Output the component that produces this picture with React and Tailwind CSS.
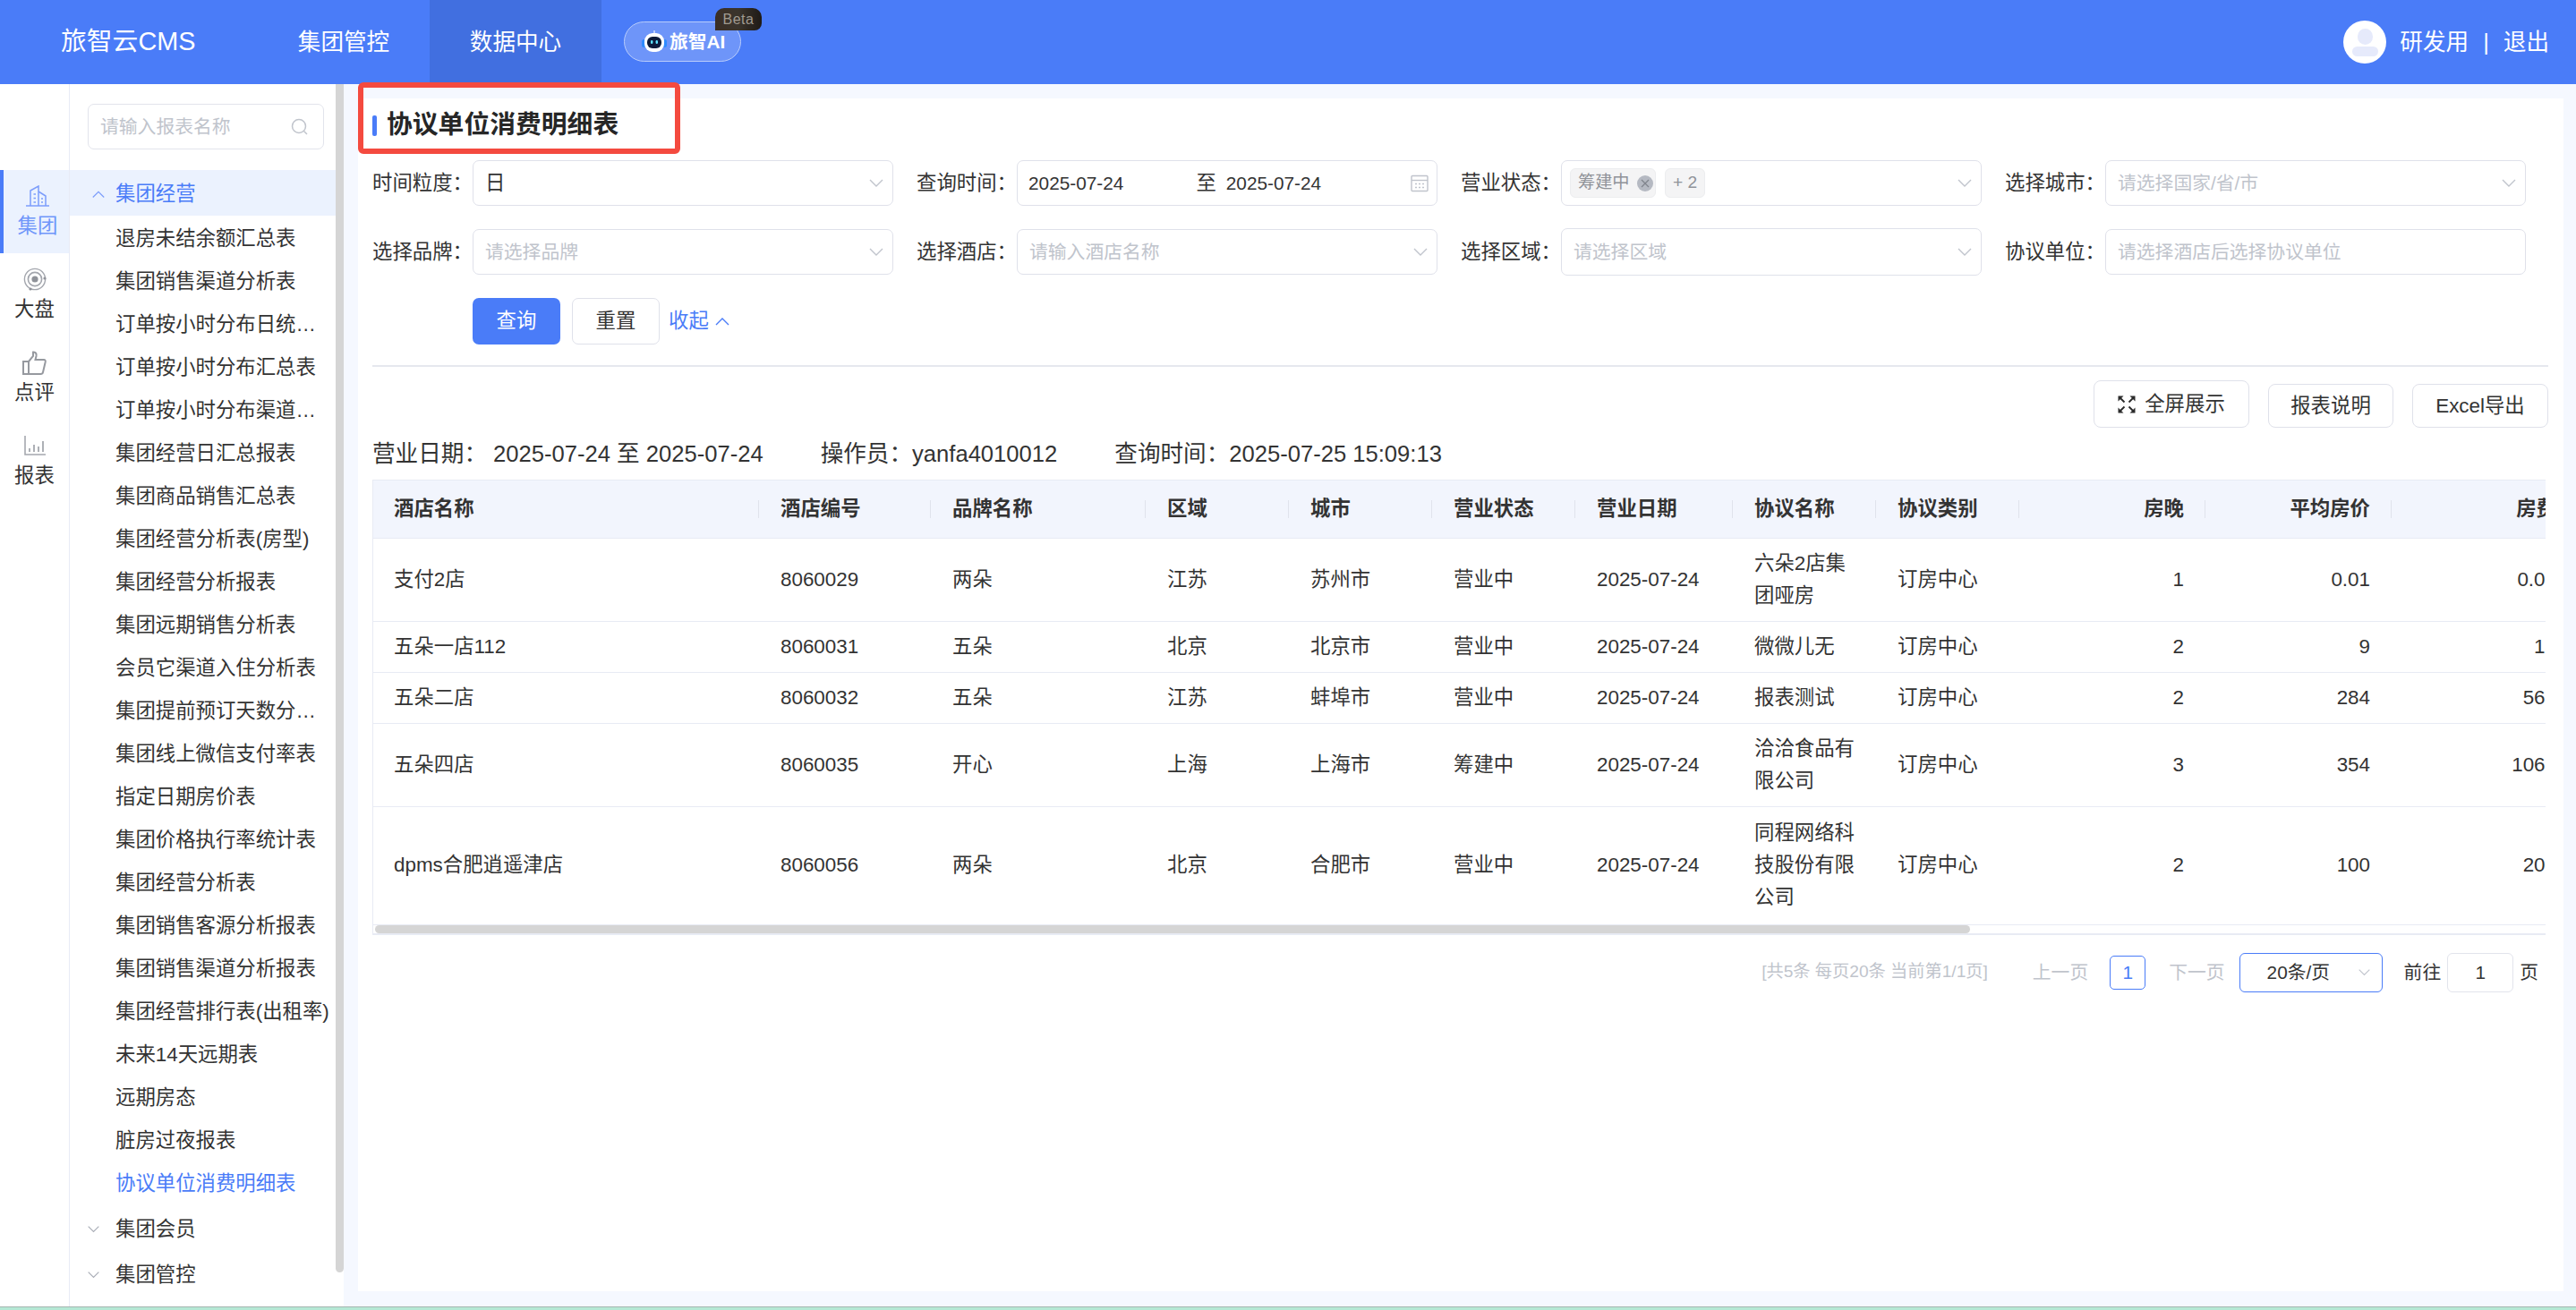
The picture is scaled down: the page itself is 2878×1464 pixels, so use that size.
import React from "react";

const menuItems = [
  "退房未结余额汇总表","集团销售渠道分析表","订单按小时分布日统计报表","订单按小时分布汇总表","订单按小时分布渠道分析表",
  "集团经营日汇总报表","集团商品销售汇总表","集团经营分析表(房型)","集团经营分析报表","集团远期销售分析表",
  "会员它渠道入住分析表","集团提前预订天数分析报表","集团线上微信支付率表","指定日期房价表","集团价格执行率统计表",
  "集团经营分析表","集团销售客源分析报表","集团销售渠道分析报表","集团经营排行表(出租率)","未来14天远期表",
  "远期房态","脏房过夜报表","协议单位消费明细表",
];

const cols = [
  { t: "酒店名称", w: "w-[432px]" }, { t: "酒店编号", w: "w-[192px]" }, { t: "品牌名称", w: "w-[240px]" },
  { t: "区域", w: "w-[160px]" }, { t: "城市", w: "w-[160px]" }, { t: "营业状态", w: "w-[160px]" },
  { t: "营业日期", w: "w-[176px]" }, { t: "协议名称", w: "w-[160px]" }, { t: "协议类别", w: "w-[160px]" },
  { t: "房晚", w: "w-[208px]", r: true }, { t: "平均房价", w: "w-[208px]", r: true }, { t: "房费", w: "w-[208px]", r: true },
];

const rows = [
  { h: "h-[93px]", d: ["支付2店","8060029","两朵","江苏","苏州市","营业中","2025-07-24","六朵2店集团哑房","订房中心","1","0.01","0.01"] },
  { h: "h-[57px]", d: ["五朵一店112","8060031","五朵","北京","北京市","营业中","2025-07-24","微微儿无","订房中心","2","9","18"] },
  { h: "h-[57px]", d: ["五朵二店","8060032","五朵","江苏","蚌埠市","营业中","2025-07-24","报表测试","订房中心","2","284","568"] },
  { h: "h-[93px]", d: ["五朵四店","8060035","开心","上海","上海市","筹建中","2025-07-24","洽洽食品有限公司","订房中心","3","354","1062"] },
  { h: "h-[132px]", d: ["dpms合肥逍遥津店","8060056","两朵","北京","合肥市","营业中","2025-07-24","同程网络科技股份有限公司","订房中心","2","100","200"] },
];

function Chevron({ up, className = "" }) {
  return (
    <svg width="18" height="10" viewBox="0 0 18 10" fill="none" className={className}>
      <polyline points={up ? "2,9 9,2 16,9" : "2,1 9,8 16,1"} stroke="currentColor" strokeWidth="1.4" />
    </svg>
  );
}

function BuildingIcon() {
  return (
    <svg width="26" height="24" viewBox="0 0 26 24" fill="none" stroke="#7c9dfb" strokeWidth="1.5">
      <path d="M0 23H26" />
      <path d="M5 23V6L14 1V23" />
      <path d="M14 7L22 12V23" />
      <path d="M8.5 10H11M8.5 14.5H11M8.5 19H11M17 15H19M17 19H19" />
    </svg>
  );
}
function TargetIcon() {
  return (
    <svg width="26" height="26" viewBox="0 0 26 26" fill="none">
      <circle cx="13" cy="13" r="11.6" stroke="#a3a6ad" strokeWidth="1.4" />
      <circle cx="13" cy="13" r="7.6" stroke="#a3a6ad" strokeWidth="1.6" />
      <circle cx="13" cy="13" r="3.6" fill="#8f9299" />
      <circle cx="24" cy="12" r="1.6" fill="#8f9299" />
      <circle cx="8" cy="24" r="1.6" fill="#8f9299" />
    </svg>
  );
}
function ThumbIcon() {
  return (
    <svg width="27" height="27" viewBox="0 0 27 27" fill="none" stroke="#96999f" strokeWidth="2">
      <path d="M1 12H7V26H1Z" />
      <path d="M7 12L12 6V1.5C15 1 16 3.5 15.5 6L14.5 10H24C25.5 10 26 11 25.7 12.5L23 24C22.7 25.3 22 26 20.5 26H7" />
    </svg>
  );
}
function BarsIcon() {
  return (
    <svg width="24" height="22" viewBox="0 0 24 22" fill="none" stroke="#a5a8ae">
      <path d="M1 0V21H24" strokeWidth="1.6" />
      <path d="M6 14V18M11 10V18M16 12V18M21 6V18" strokeWidth="1.8" />
    </svg>
  );
}
function SearchIcon() {
  return (
    <svg width="20" height="20" viewBox="0 0 20 20" fill="none" stroke="#c0c4cc" strokeWidth="1.5">
      <circle cx="9" cy="9" r="7.5" />
      <path d="M14.5 14.5L18 18" />
    </svg>
  );
}
function RobotIcon() {
  return (
    <svg width="28" height="26" viewBox="0 0 28 26" fill="none">
      <path d="M14 0V4" stroke="#dbe6ff" strokeWidth="1.4" />
      <rect x="0" y="10" width="5" height="9" rx="2.5" fill="#2f8bff" />
      <rect x="23" y="10" width="5" height="9" rx="2.5" fill="#2f8bff" />
      <rect x="3" y="3" width="22" height="21" rx="9" fill="#ffffff" />
      <rect x="6" y="7" width="16" height="13" rx="6" fill="#0d1b3a" />
      <rect x="10" y="11" width="2.4" height="4" rx="1.2" fill="#5fe3ff" />
      <rect x="15.6" y="11" width="2.4" height="4" rx="1.2" fill="#5fe3ff" />
    </svg>
  );
}
function CalendarIcon() {
  return (
    <svg width="20" height="20" viewBox="0 0 20 20" fill="none" stroke="#c0c4cc" strokeWidth="1.4">
      <rect x="1" y="1.5" width="18" height="17" rx="1" />
      <path d="M1 6.5H19" />
      <path d="M5 10.5H7M9 10.5H11M13 10.5H15M5 14.5H7M9 14.5H11M13 14.5H15" />
    </svg>
  );
}
function ExpandIcon() {
  return (
    <svg width="20" height="20" viewBox="0 0 20 20" fill="none">
      <path d="M7.5 7.5L2.5 2.5M12.5 7.5L17.5 2.5M7.5 12.5L2.5 17.5M12.5 12.5L17.5 17.5" stroke="#2b2b2b" strokeWidth="1.8" />
      <path d="M0.5 0.5H6.5L0.5 6.5ZM19.5 0.5H13.5L19.5 6.5ZM0.5 19.5H6.5L0.5 13.5ZM19.5 19.5H13.5L19.5 13.5Z" fill="#2b2b2b" />
    </svg>
  );
}

function RailItem({ icon, label, active }) {
  return (
    <div className={active
      ? "h-[93px] flex flex-col items-center bg-[#ebf2fe] border-l-[4px] border-[#4a7cf8] pl-[3px]"
      : "h-[93px] flex flex-col items-center"}>
      <div className="h-[46px] flex items-center pt-[12px]">{icon}</div>
      <div className={active ? "text-[22.4px] leading-[34px] text-[#6f96fa]" : "text-[22.4px] leading-[34px] text-[#333333]"}>{label}</div>
    </div>
  );
}

function Field({ label, children }) {
  return (
    <div className="w-[582px] flex items-center shrink-0">
      <div className="w-[112px] shrink-0 text-[22.4px] text-[#333333]">{label}：</div>
      {children}
    </div>
  );
}

function Select({ placeholder, value, tall, children }) {
  return (
    <div className={(tall ? "h-[53px] " : "h-[51px] ") + "w-[470px] border border-[#dfe1ea] rounded-[7px] bg-white flex items-center pl-[13px] pr-[9px]"}>
      <div className="flex-1 flex items-center min-w-0">
        {children ? children : value
          ? <span className="text-[22.4px] text-[#333333]">{value}</span>
          : <span className="text-[20.8px] text-[#c0c4cc]">{placeholder}</span>}
      </div>
      <Chevron className="text-[#c0c4cc]" />
    </div>
  );
}

export default function App() {
  return (
    <div className="w-[2878px] h-[1464px] overflow-hidden flex flex-col bg-[#f5f8ff] font-['Liberation_Sans','Noto_Sans_CJK_SC',sans-serif]">
      {/* top bar */}
      <header className="h-[94px] shrink-0 bg-[#4a7cf8] flex items-center text-white">
        <div className="w-[288px] pl-[68px] text-[28.8px]">旅智云CMS</div>
        <div className="w-[192px] h-full flex items-center justify-center text-[25.6px]">集团管控</div>
        <div className="w-[192px] h-full flex items-center justify-center text-[25.6px] bg-[#416fe0]">数据中心</div>
        <div className="relative ml-[25px] w-[131px] h-[45px] rounded-full border border-[#b8ccfb] bg-[#6e95f9] flex items-center pl-[19px] -mt-[1px]">
          <RobotIcon />
          <span className="ml-[3px] text-[20.8px] font-bold">旅智AI</span>
          <span className="absolute left-[101px] -top-[16px] w-[52px] h-[25px] rounded-tl-[10px] rounded-tr-[10px] rounded-br-[8px] bg-linear-to-r from-[#3a2e26] via-[#3a342c] to-[#1f1a16] text-[#a09a90] text-[16px] leading-[25px] text-center tracking-[0.5px]">Beta</span>
        </div>
        <div className="ml-auto pr-[30px] flex items-center text-[25.6px]">
          <div className="w-[48px] h-[48px] rounded-full bg-white flex flex-col items-center pt-[9px] mr-[15px]">
            <div className="w-[17px] h-[18px] rounded-full bg-[#e6eafb]"></div>
            <div className="w-[29px] h-[11px] rounded-full bg-[#e6eafb] mt-[2px]"></div>
          </div>
          <span>研发用</span>
          <span className="mx-[16px]">|</span>
          <span>退出</span>
        </div>
      </header>

      <div className="flex-1 flex min-h-0">
        {/* rail */}
        <div className="w-[78px] shrink-0 bg-white border-r border-[#e8ebf6] pt-[96px]">
          <RailItem active icon={<BuildingIcon />} label="集团" />
          <RailItem icon={<TargetIcon />} label="大盘" />
          <RailItem icon={<ThumbIcon />} label="点评" />
          <RailItem icon={<BarsIcon />} label="报表" />
        </div>

        {/* menu */}
        <div className="w-[306px] shrink-0 bg-white flex">
          <div className="w-[297px] shrink-0">
            <div className="ml-[20px] mt-[22px] w-[264px] h-[51px] rounded-[7px] border border-[#e2e4ec] flex items-center pl-[13px] pr-[16px] text-[20.8px] text-[#c0c4cc]">
              <span className="flex-1">请输入报表名称</span>
              <SearchIcon />
            </div>
            <div className="mt-[23px] h-[51px] pt-[3px] bg-[#ebf2fe] flex items-center pl-[24px] text-[#4a7cf8] text-[22.4px]">
              <Chevron up className="w-[16px] text-[#7c9dfb]" />
              <span className="ml-[11px]">集团经营</span>
            </div>
            {menuItems.map((m, i) => (
              <div key={i} className={(i === menuItems.length - 1 ? "text-[#4a7cf8]" : "text-[#333333]") + " h-[48px] pt-[3px] ml-[51px] w-[240px] leading-[45px] text-[22.4px] truncate"}>{m}</div>
            ))}
            <div className="h-[51px] mt-[2px] pt-[3px] flex items-center pl-[19px] text-[22.4px] text-[#333333]">
              <Chevron className="w-[15px] text-[#a9adb6]" />
              <span className="ml-[17px]">集团会员</span>
            </div>
            <div className="h-[51px] pt-[3px] flex items-center pl-[19px] text-[22.4px] text-[#333333]">
              <Chevron className="w-[15px] text-[#a9adb6]" />
              <span className="ml-[17px]">集团管控</span>
            </div>
          </div>
          <div className="w-[9px] h-[1328px] bg-[#d5d5d5] rounded-b-[5px]"></div>
        </div>

        {/* main */}
        <main className="flex-1 pl-[16px] pr-[14px] pt-[16px] pb-[17px] min-w-0">
          <div className="relative h-full bg-white pl-[16px]">
            <div className="absolute left-0 -top-[18px] w-[360px] h-[80px] border-[6px] border-[#f44a3f] rounded-[6px]"></div>
            <div className="h-[60px] flex items-center">
              <span className="w-[5px] h-[23px] rounded-[2px] bg-[#4a7cf8]"></span>
              <h1 className="ml-[11px] text-[28.8px] font-bold text-[#262626]">协议单位消费明细表</h1>
            </div>

            <div className="mt-[9px] flex h-[51px] gap-[26px]">
              <Field label="时间粒度"><Select value="日" /></Field>
              <Field label="查询时间">
                <div className="h-[51px] w-[470px] border border-[#dfe1ea] rounded-[7px] flex items-center pl-[12px] pr-[9px] text-[#333333] text-[20.8px]">
                  <span>2025-07-24</span>
                  <span className="ml-[81px] text-[22.4px]">至</span>
                  <span className="ml-[11px]">2025-07-24</span>
                  <span className="ml-auto"><CalendarIcon /></span>
                </div>
              </Field>
              <Field label="营业状态">
                <Select>
                  <span className="-ml-[4px] h-[33px] w-[96px] rounded-[6px] bg-[#f4f4f5] border border-[#ecedef] flex items-center pl-[8px] text-[19.2px] text-[#909399]">
                    筹建中
                    <span className="ml-[8px] w-[18px] h-[18px] rounded-full bg-[#b5b9c2] flex items-center justify-center text-[#7f838c]">
                      <svg width="10" height="10" viewBox="0 0 10 10" stroke="currentColor" strokeWidth="1.2"><path d="M1 1L9 9M9 1L1 9" /></svg>
                    </span>
                  </span>
                  <span className="ml-[10px] h-[33px] w-[45px] rounded-[6px] bg-[#f4f4f5] border border-[#ecedef] flex items-center justify-center text-[19.2px] text-[#909399]">+ 2</span>
                </Select>
              </Field>
              <Field label="选择城市"><Select placeholder="请选择国家/省/市" /></Field>
            </div>

            <div className="mt-[26px] flex h-[51px] gap-[26px]">
              <Field label="选择品牌"><Select placeholder="请选择品牌" /></Field>
              <Field label="选择酒店"><Select placeholder="请输入酒店名称" /></Field>
              <Field label="选择区域"><Select tall placeholder="请选择区域" /></Field>
              <Field label="协议单位">
                <div className="h-[51px] w-[470px] border border-[#dfe1ea] rounded-[7px] flex items-center pl-[13px] text-[20.8px] text-[#c0c4cc]">请选择酒店后选择协议单位</div>
              </Field>
            </div>

            <div className="mt-[26px] pl-[112px] flex items-center text-[22.4px]">
              <button className="w-[98px] h-[52px] rounded-[7px] bg-[#4a7cf8] text-white">查询</button>
              <button className="ml-[13px] w-[98px] h-[52px] rounded-[7px] border border-[#dfe1ea] text-[#333333]">重置</button>
              <span className="ml-[10px] text-[#4a7cf8]">收起</span>
              <Chevron up className="ml-[6px] text-[#4a7cf8]" />
            </div>

            <div className="mt-[23px] mr-[17px] h-[2px] bg-[#e6e8ee]"></div>

            <div className="mt-[15px] mr-[17px] flex items-end justify-end gap-[21px] text-[22.4px] text-[#333333]">
              <button className="w-[174px] h-[53px] rounded-[8px] border border-[#dfe1ea] flex items-center justify-center gap-[10px]"><ExpandIcon />全屏展示</button>
              <button className="w-[140px] h-[49px] rounded-[8px] border border-[#dfe1ea]">报表说明</button>
              <button className="w-[152px] h-[49px] rounded-[8px] border border-[#dfe1ea]">Excel导出</button>
            </div>

            <div className="mt-[11px] h-[36px] flex items-center text-[25.6px] text-[#333333] whitespace-nowrap">
              <span>营业日期：</span><span className="ml-[7px]">2025-07-24 至 2025-07-24</span>
              <span className="ml-[64px]">操作员：</span><span>yanfa4010012</span>
              <span className="ml-[64px]">查询时间：</span><span>2025-07-25 15:09:13</span>
            </div>

            <div className="mt-[11px] w-[2428px] overflow-hidden border-t border-l border-[#e8ebf4]">
              <table className="table-fixed -ml-px w-[2464px] text-[22.4px] leading-[36px] text-[#333333]">
                <thead>
                  <tr className="bg-[#f2f5fd]">
                    {cols.map((c, i) => (
                      <th key={i} className={c.w + " relative h-[64px] px-[24px] font-bold border-b border-[#e8ebf4] " + (c.r ? "text-right" : "text-left")}>
                        {c.t}
                        {i < cols.length - 1 && <span className="absolute right-0 top-[22px] h-[20px] w-px bg-[#e0e3ec]"></span>}
                      </th>
                    ))}
                  </tr>
                </thead>
                <tbody>
                  {rows.map((r, ri) => (
                    <tr key={ri}>
                      {r.d.map((v, i) => (
                        <td key={i} className={r.h + " border-b border-[#e8ebf4] pl-[24px] " + (cols[i].r ? "pr-[24px] text-right" : "pr-[16px] text-left")}>{v}</td>
                      ))}
                    </tr>
                  ))}
                </tbody>
              </table>
              <div className="h-[11px] bg-white border-b-[2px] border-[#e8ebf4]">
                <div className="w-[1782px] h-[9px] ml-[2px] bg-[#d5d5d5] rounded-[5px]"></div>
              </div>
            </div>

            <div className="mt-[20px] pr-[28px] flex items-center justify-end h-[44px] whitespace-nowrap text-[20.8px] text-[#333333]">
              <span className="text-[19.2px] text-[#c0c4cc]">[共5条 每页20条 当前第1/1页]</span>
              <span className="ml-[50px] text-[#c0c4cc]">上一页</span>
              <span className="ml-[24px] w-[40px] h-[38px] rounded-[5px] border border-[#4a7cf8] text-[#4a7cf8] flex items-center justify-center">1</span>
              <span className="ml-[26px] text-[#c0c4cc]">下一页</span>
              <div className="ml-[16px] w-[160px] h-[44px] rounded-[6px] border border-[#4a7cf8] flex items-center pl-[30px] pr-[12px] justify-between">
                <span>20条/页</span>
                <Chevron className="w-[15px] text-[#c0c4cc]" />
              </div>
              <span className="ml-[24px]">前往</span>
              <span className="ml-[7px] w-[74px] h-[44px] rounded-[6px] border border-[#e2e4ec] flex items-center justify-center">1</span>
              <span className="ml-[7px]">页</span>
            </div>
          </div>
        </main>
      </div>

      <div className="h-[4px] shrink-0 bg-[#b5e8d5] border-t border-[#a6b5b0]"></div>
    </div>
  );
}
